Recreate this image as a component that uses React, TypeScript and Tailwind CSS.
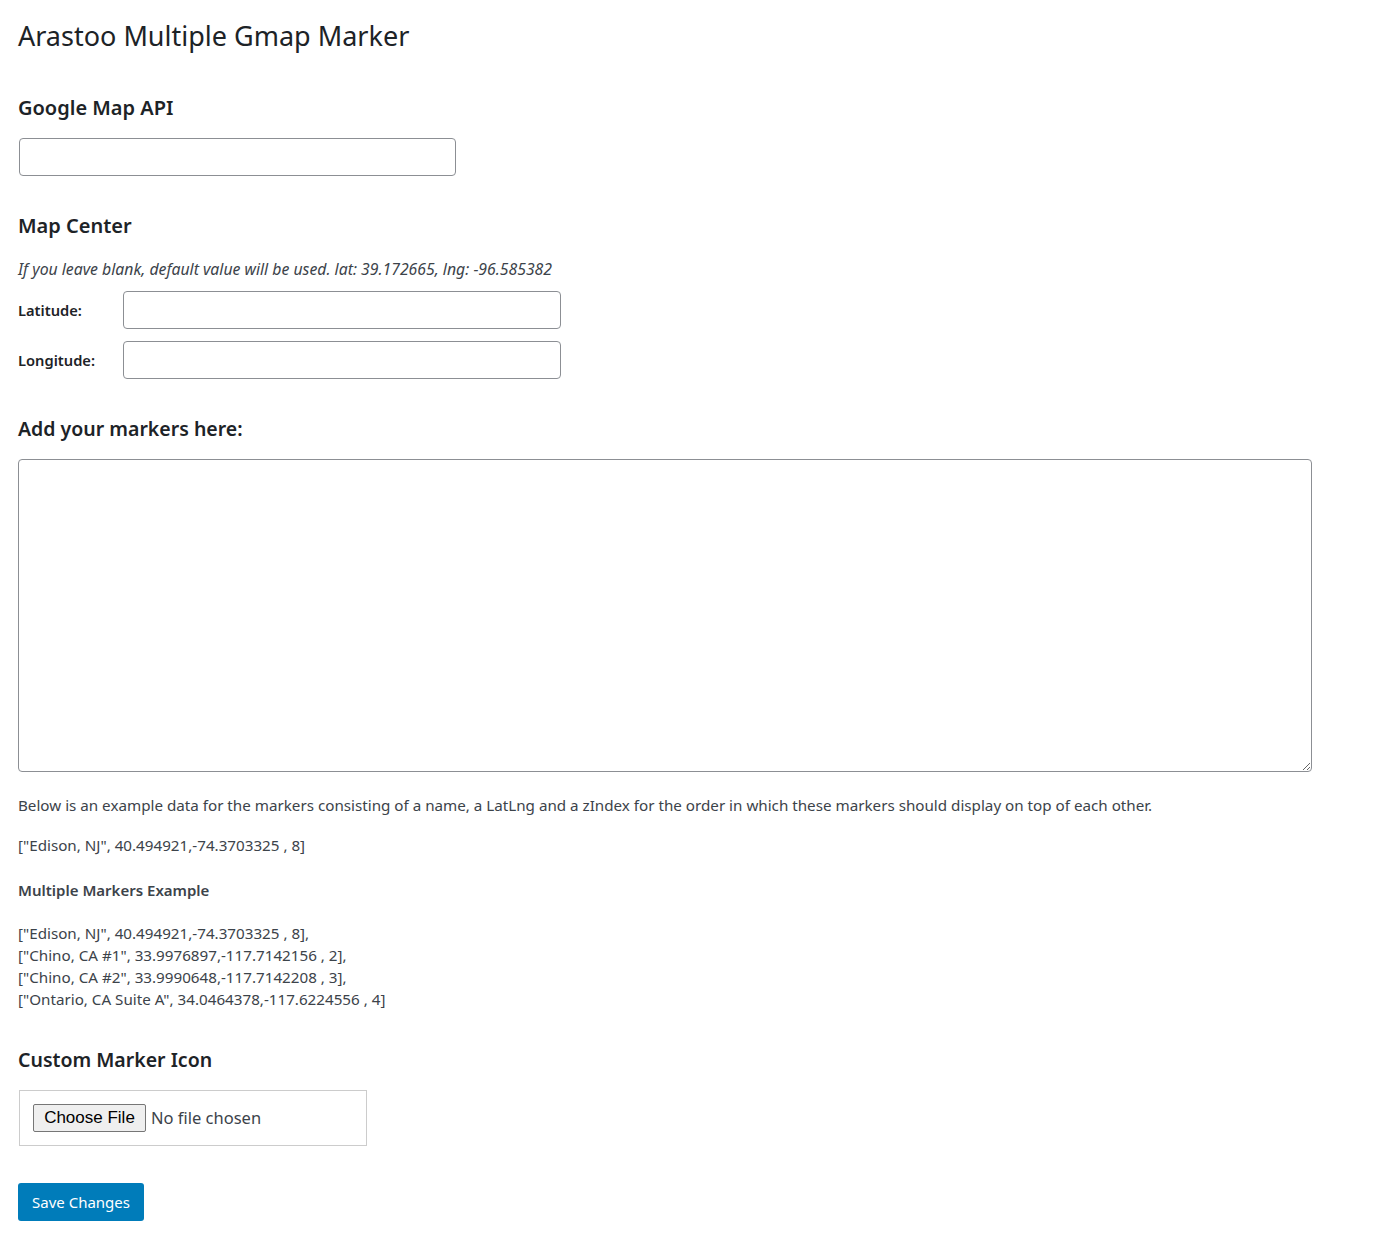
const font = "font-['Segoe_UI','Noto_Sans',sans-serif]";

function Heading({
  children,
  className = "",
  small = false,
}: {
  children: React.ReactNode;
  className?: string;
  small?: boolean;
}) {
  return (
    <h2
      className={`${small ? "text-[19.5px]" : "text-[20px]"} leading-[28px] font-semibold text-[#1d2327] ${className}`}
    >
      {children}
    </h2>
  );
}

function TextInput({ className = "" }: { className?: string }) {
  return (
    <input
      type="text"
      className={`h-[38px] rounded-[4px] border border-[#8c8f94] bg-white px-2 outline-none ${className}`}
    />
  );
}

const markers = [
  '["Edison, NJ", 40.494921,-74.3703325 , 8],',
  '["Chino, CA #1", 33.9976897,-117.7142156 , 2],',
  '["Chino, CA #2", 33.9990648,-117.7142208 , 3],',
  '["Ontario, CA Suite A", 34.0464378,-117.6224556 , 4]',
];

export default function App() {
  return (
    <div className={`min-h-[1255px] bg-white pl-[18px] pt-[18px] text-[15.2px] text-[#3c434a] ${font}`}>
      <h1 className="text-[27px] leading-[36px] font-normal text-[#1d2327]">Arastoo Multiple Gmap Marker</h1>

      <Heading className="mt-[40px]">Google Map API</Heading>
      <TextInput className="mt-[16px] ml-px w-[437px]" />

      <Heading className="mt-[36px]">Map Center</Heading>
      <p className="mt-[18px] leading-[22px] text-[15.8px] italic">
        If you leave blank, default value will be used. lat: 39.172665, lng: -96.585382
      </p>
      <div className="mt-[11px] flex flex-col gap-[12px] text-[14.7px]">
        <div className="flex items-center">
          <label className="w-[105px] font-semibold text-[#1d2327]">Latitude:</label>
          <TextInput className="w-[438px]" />
        </div>
        <div className="flex items-center">
          <label className="w-[105px] font-semibold text-[#1d2327]">Longitude:</label>
          <TextInput className="w-[438px]" />
        </div>
      </div>

      <Heading small className="mt-[36px]">Add your markers here:</Heading>
      <textarea className="mt-[16px] block h-[313px] w-[1294px] rounded-[4px] border border-[#8c8f94] bg-white p-2 outline-none" />

      <p className="mt-[22px] leading-[22px]">
        Below is an example data for the markers consisting of a name, a LatLng and a zIndex for the order in which
        these markers should display on top of each other.
      </p>
      <p className="mt-[18px] leading-[22px]">["Edison, NJ", 40.494921,-74.3703325 , 8]</p>
      <p className="mt-[23px] leading-[22px] text-[15px] font-semibold">Multiple Markers Example</p>
      <div className="mt-[21px] leading-[22px]">
        {markers.map((m) => (
          <div key={m}>{m}</div>
        ))}
      </div>

      <Heading small className="mt-[36px]">Custom Marker Icon</Heading>
      <div className="mt-[16px] ml-px flex h-[56px] w-[348px] items-center border border-[#cccccc] pl-[13px]">
        <span className="flex h-[28px] w-[113px] items-center justify-center rounded-[2px] border border-[#767676] bg-[#efefef] font-['Liberation_Sans',Arial,sans-serif] text-[17px] text-black">
          Choose File
        </span>
        <span className="ml-[5px] text-[16.5px] text-[#3c434a]">No file chosen</span>
      </div>

      <button className="mt-[37px] h-[38px] w-[126px] rounded-[3px] bg-[#007cba] text-[15px] text-white">
        Save Changes
      </button>
    </div>
  );
}
